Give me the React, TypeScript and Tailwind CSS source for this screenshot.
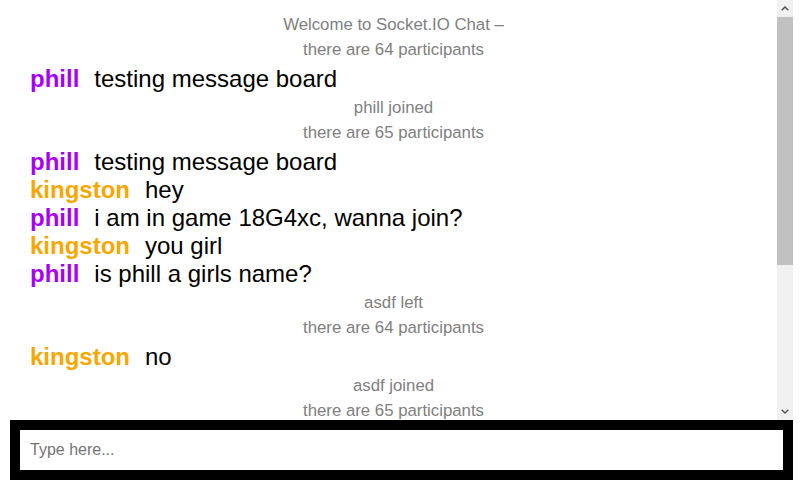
import React from 'react';

type Item =
  | { kind: 'log'; text: string }
  | { kind: 'msg'; user: string; color: string; body: string };

const PURPLE = 'text-[#a700ff]';
const ORANGE = 'text-[#f8a700]';

const items: Item[] = [
  { kind: 'log', text: 'Welcome to Socket.IO Chat –' },
  { kind: 'log', text: 'there are 64 participants' },
  { kind: 'msg', user: 'phill', color: PURPLE, body: 'testing message board' },
  { kind: 'log', text: 'phill joined' },
  { kind: 'log', text: 'there are 65 participants' },
  { kind: 'msg', user: 'phill', color: PURPLE, body: 'testing message board' },
  { kind: 'msg', user: 'kingston', color: ORANGE, body: 'hey' },
  { kind: 'msg', user: 'phill', color: PURPLE, body: 'i am in game 18G4xc, wanna join?' },
  { kind: 'msg', user: 'kingston', color: ORANGE, body: 'you girl' },
  { kind: 'msg', user: 'phill', color: PURPLE, body: 'is phill a girls name?' },
  { kind: 'log', text: 'asdf left' },
  { kind: 'log', text: 'there are 64 participants' },
  { kind: 'msg', user: 'kingston', color: ORANGE, body: 'no' },
  { kind: 'log', text: 'asdf joined' },
  { kind: 'log', text: 'there are 65 participants' },
];

const Arrow = ({ down }: { down?: boolean }) => (
  <svg width="8" height="5" viewBox="0 0 8 5" className={down ? 'rotate-180' : ''}>
    <path d="M0 4 L4 0 L8 4 L6.5 4.5 L4 2 L1.5 4.5 Z" fill="#505050" />
  </svg>
);

export default function App() {
  return (
    <div className="w-[803px] h-[483px] bg-white font-['Liberation_Sans',Arial,sans-serif] overflow-hidden">
      <div className="flex w-[793px] h-[420px]">
        <ul className="flex-1 overflow-hidden pt-[10px] pl-[30px] pr-[20px] text-[24px] leading-[normal]">
          {items.map((it, i) =>
            it.kind === 'log' ? (
              <li key={i} className="my-[5px] text-center text-[16.8px] leading-[normal] text-[#808080]">
                {it.text}
              </li>
            ) : (
              <li key={i} className="text-black">
                <span className={`font-bold pr-[15px] ${it.color}`}>{it.user}</span>
                <span>{it.body}</span>
              </li>
            )
          )}
        </ul>
        <div className="w-[16px] h-full bg-[#f1f1f1] flex flex-col">
          <div className="h-[17px] flex items-center justify-center">
            <Arrow />
          </div>
          <div className="h-[248px] bg-[#c1c1c1]" />
          <div className="flex-1" />
          <div className="h-[17px] flex items-center justify-center">
            <Arrow down />
          </div>
        </div>
      </div>
      <div className="ml-[10px] w-[783px] h-[60px] border-[10px] border-black">
        <input
          placeholder="Type here..."
          className="w-full h-full pl-[10px] outline-none text-[16px] bg-white text-black placeholder:text-[#757575]"
        />
      </div>
    </div>
  );
}
